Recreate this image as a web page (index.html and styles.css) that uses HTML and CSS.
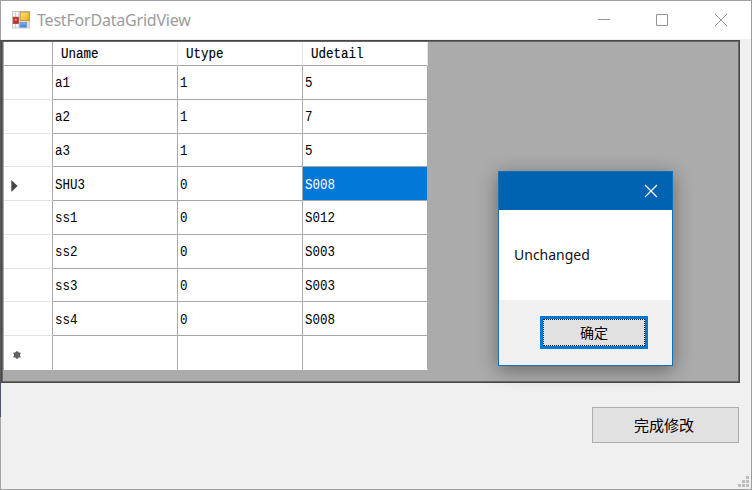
FILE: index.html
```html
<!DOCTYPE html>
<html lang="zh-CN">
<head>
<meta charset="utf-8">
<title>TestForDataGridView</title>
<link rel="stylesheet" href="styles.css">
</head>
<body>
<div class="window">
  <header class="titlebar">
    <svg class="app-icon" width="18" height="18" viewBox="0 0 18 18">
      <defs>
        <linearGradient id="gold" x2="1" y2="1"><stop stop-color="#ffe38a"/><stop offset="1" stop-color="#eeae10"/></linearGradient>
        <linearGradient id="blue" x2="0" y2="1"><stop stop-color="#82b4fa"/><stop offset="1" stop-color="#3a78df"/></linearGradient>
      </defs>
      <rect x=".5" y=".5" width="17" height="16.5" fill="#f4f4f4" stroke="#c8c8c8"/>
      <path d="M3.5 1v5M3.5 12v5M7 1v16M1 12.5h6M16 11v6" stroke="#cfcfcf"/>
      <rect x="1.2" y="6.2" width="5.2" height="6.2" fill="#c92820" stroke="#a9443c" stroke-width=".8"/>
      <rect x="2.8" y="7.8" width="2" height="2" fill="#f09085"/>
      <rect x="8.2" y="1" width="9" height="8.8" fill="url(#gold)" stroke="#b58a2b" stroke-width=".9"/>
      <rect x="7.9" y="11.5" width="6.8" height="4.6" fill="url(#blue)" stroke="#6d91cc" stroke-width=".8"/>
    </svg>
    <h1 class="title">TestForDataGridView</h1>
    <svg class="controls" width="132" height="14" viewBox="0 0 132 14" fill="none" stroke="#939393">
      <path d="M0 6.5h12M58.5 1.5h11v11h-11zM117 1l12 12M129 1l-12 12"/>
    </svg>
  </header>
  <main class="client">
    <section class="grid-view">
      <div class="grid">
        <div class="corner"></div><div class="head"><span>Uname</span></div><div class="head"><span>Utype</span></div><div class="head"><span>Udetail</span></div>
        <div class="row-head"></div><div class="cell"><span>a1</span></div><div class="cell"><span>1</span></div><div class="cell"><span>5</span></div>
        <div class="row-head"></div><div class="cell"><span>a2</span></div><div class="cell"><span>1</span></div><div class="cell"><span>7</span></div>
        <div class="row-head"></div><div class="cell"><span>a3</span></div><div class="cell"><span>1</span></div><div class="cell"><span>5</span></div>
        <div class="row-head"><svg width="8" height="12" viewBox="0 0 8 12"><path d="M.3 0L6.6 6 .3 12z" fill="#444"/></svg></div><div class="cell"><span>SHU3</span></div><div class="cell"><span>0</span></div><div class="cell selected"><span>S008</span></div>
        <div class="row-head"></div><div class="cell"><span>ss1</span></div><div class="cell"><span>0</span></div><div class="cell"><span>S012</span></div>
        <div class="row-head"></div><div class="cell"><span>ss2</span></div><div class="cell"><span>0</span></div><div class="cell"><span>S003</span></div>
        <div class="row-head"></div><div class="cell"><span>ss3</span></div><div class="cell"><span>0</span></div><div class="cell"><span>S003</span></div>
        <div class="row-head"></div><div class="cell"><span>ss4</span></div><div class="cell"><span>0</span></div><div class="cell"><span>S008</span></div>
        <div class="row-head new-row"><svg width="8" height="8" viewBox="0 0 8 8"><circle cx="4" cy="4" r="3" fill="#444"/><path d="M4 0v8M.5 1.8l7 4.4M.5 6.2l7-4.4" stroke="#666" stroke-width="1.5"/></svg></div><div class="cell new-row"></div><div class="cell new-row"></div><div class="cell new-row"></div>
      </div>
    </section>
    <div class="actions"><button class="finish">完成修改</button></div>
    <footer class="status">
      <svg width="12" height="12" viewBox="0 0 12 12" fill="#bdbdbd"><path d="M8 0h3v3h-3zM8 4h3v3h-3zM4 4h3v3h-3zM8 8h3v3h-3zM4 8h3v3h-3zM0 8h3v3h-3z"/></svg>
    </footer>
  </main>
</div>
<div class="dialog" role="dialog">
  <div class="dialog-title"><svg width="14" height="14" viewBox="0 0 14 14" stroke="#fff" stroke-width="1.2"><path d="M1 1l12 12M13 1L1 13"/></svg></div>
  <div class="message">Unchanged</div>
  <div class="dialog-actions"><button class="ok"><span>确定</span></button></div>
</div>
</body>
</html>
```
FILE: styles.css
```css
* { box-sizing: border-box; }
body { margin: 0; width: 752px; height: 490px; overflow: hidden; }
button { margin: 0; padding: 0; border-radius: 0; color: #000; }
svg { display: block; flex: none; }

.window {
  width: 752px;
  height: 490px;
  display: flex;
  flex-direction: column;
  border: 1px solid #a2a2a2;
  border-image: linear-gradient(#a2a2a2 40px, #55585a 40px, #55585a 382px, #47546f 382px, #47546f 417px, #a2a2a2 417px) 1;
  border-right: 0;
  background: linear-gradient(#9c9c9c, #9c9c9c) right / 1px 100% no-repeat, #f0f0f0;
}

.titlebar {
  height: 38px;
  margin-right: 1px;
  padding: 0 21px 0 11px;
  display: flex;
  align-items: center;
  background: #fff;
}
.app-icon { margin-top: -1px; }
.title {
  flex: 1;
  margin: 0 0 0 7px;
  font: 400 16px/22px "Noto Sans", "Open Sans", sans-serif;
  letter-spacing: -.2px;
  color: #9c9c9c;
}

.client { flex: 1; display: flex; flex-direction: column; }
.grid-view {
  width: 739px;
  height: 343px;
  margin-top: 1px;
  border: 1px solid #484848;
  outline: 1px solid #686868;
  outline-offset: -2px;
  padding: 1px 0 0 2px;
  background: #ababab;
}
.grid {
  width: 424px;
  display: grid;
  grid-template-columns: 49px 125px 125px 125px;
  grid-template-rows: 24px repeat(9, 33.75px);
  font: 12.5px/16px "Liberation Mono", monospace;
  color: #000;
}
.grid span { transform: scaleY(1.16); }
.corner, .head, .row-head, .cell {
  display: flex;
  align-items: center;
  background: #fff;
  border-right: 1px solid #a8a8a8;
  border-bottom: 1px solid #a8a8a8;
}
.head { padding: 3px 0 0 8px; border-right-color: #e6e6e6; -webkit-text-stroke: .15px #000; }
.row-head { padding: 4px 0 0 7px; border-bottom-color: #e4e4e4; }
.cell { padding: 4px 0 0 2px; }
.selected { background: #0078d7; color: #fff; }
.new-row { border-bottom-color: #fff; }
.row-head.new-row { padding: 5px 0 0 9px; }

.actions { padding: 24px 13px 0 0; display: flex; justify-content: flex-end; }
.finish {
  width: 147px;
  height: 36px;
  padding-right: 3px;
  border: 1px solid #adadad;
  background: #e1e1e1;
  font: 15px/20px "Noto Sans CJK SC", sans-serif;
}
.status { flex: 1; display: flex; align-items: flex-end; justify-content: flex-end; padding: 0 2px 1px 0; }

.dialog {
  position: absolute;
  left: 498px;
  top: 171px;
  width: 175px;
  height: 195px;
  display: flex;
  flex-direction: column;
  border: 1px solid #1670b8;
  background: #f0f0f0;
  box-shadow: 0 4px 18px rgba(0, 0, 0, .4);
}
.dialog-title {
  height: 38px;
  padding-right: 14px;
  display: flex;
  align-items: center;
  justify-content: flex-end;
  background: #0063b1;
}
.message {
  height: 90px;
  padding-left: 15px;
  background: #fff;
  font: 14px/90px "Noto Sans", "Open Sans", sans-serif;
  color: #111;
}
.dialog-actions { padding: 16px 24px 0 0; display: flex; justify-content: flex-end; }
.ok {
  width: 108px;
  height: 33px;
  border: 3px solid #0078d7;
  background: #e1e1e1;
  font: 14px/20px "Noto Sans CJK SC", sans-serif;
}
.ok span { display: block; height: 27px; border: 1px dotted #111; line-height: 24px; }
```
